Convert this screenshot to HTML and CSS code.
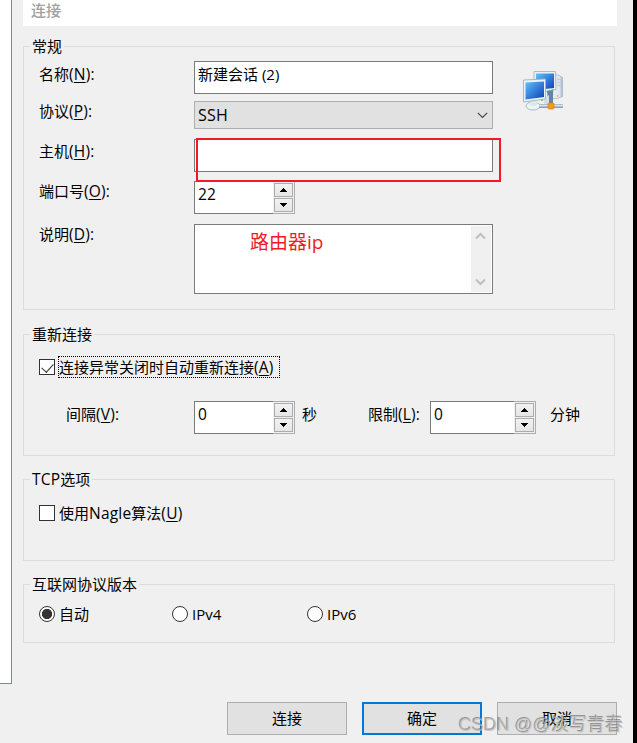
FILE: index.html
```
<!DOCTYPE html>
<html lang="zh-CN">
<head>
    <meta charset="UTF-8">
    <meta name="viewport" content="width=device-width, initial-scale=1.0">
    <title>新建会话属性</title>
    <link rel="stylesheet" href="styles.css">
</head>
<body>
    <div class="window">
        <div class="tree-panel"></div>
        <div class="content">
            <div class="title">连接</div>

            <fieldset class="group general">
                <legend>常规</legend>
                <div class="general-body">
                    <div class="form">
                        <div class="row row-name">
                            <label for="name">名称<span class="en">(<u>N</u>):</span></label>
                            <input class="text-field" id="name" type="text" value="新建会话 (2)">
                        </div>
                        <div class="row row-protocol">
                            <label>协议<span class="en">(<u>P</u>):</span></label>
                            <div class="combo">
                                <span class="en">SSH</span>
                                <svg width="11" height="7" viewBox="0 0 11 7"><path d="M0.8 0.8L5.5 5.5L10.2 0.8" fill="none" stroke="#444" stroke-width="1.2"/></svg>
                            </div>
                        </div>
                        <div class="row row-host">
                            <label for="host">主机<span class="en">(<u>H</u>):</span></label>
                            <div class="host-wrap">
                                <input class="text-field" id="host" type="text">
                                <div class="red-box"></div>
                            </div>
                        </div>
                        <div class="row row-port">
                            <label for="port">端口号<span class="en">(<u>O</u>):</span></label>
                            <div class="spinner">
                                <input class="en" id="port" type="text" value="22">
                                <div class="arrows">
                                    <button type="button"><svg width="7" height="4" viewBox="0 0 7 4"><path d="M3 0h1v1h1v1h1v1h1v1H0V3h1V2h1V1h1z"/></svg></button>
                                    <button type="button"><svg width="7" height="4" viewBox="0 0 7 4"><path d="M3 4h1V3h1V2h1V1h1V0H0v1h1v1h1v1h1z"/></svg></button>
                                </div>
                            </div>
                        </div>
                        <div class="row row-desc">
                            <label>说明<span class="en">(<u>D</u>):</span></label>
                            <div class="desc">
                                <div class="note">路由器ip</div>
                                <div class="scrollbar">
                                    <svg width="11" height="8" viewBox="0 0 11 8"><path d="M1 6.5L5.5 2L10 6.5" fill="none" stroke="#bfbfbf" stroke-width="2"/></svg>
                                    <svg width="11" height="8" viewBox="0 0 11 8"><path d="M1 1.5L5.5 6L10 1.5" fill="none" stroke="#bfbfbf" stroke-width="2"/></svg>
                                </div>
                            </div>
                        </div>
                    </div>
                    <svg class="session-icon" width="42" height="42" viewBox="0 0 42 42">
                        <defs>
                            <linearGradient id="screen" x1="0" y1="0" x2="1" y2="1">
                                <stop offset="0" stop-color="#62c4f4"/>
                                <stop offset="0.5" stop-color="#3280dc"/>
                                <stop offset="1" stop-color="#103fae"/>
                            </linearGradient>
                            <linearGradient id="tower" x1="0" y1="0" x2="1" y2="0">
                                <stop offset="0" stop-color="#eef3f7"/>
                                <stop offset="0.7" stop-color="#dce5ed"/>
                                <stop offset="1" stop-color="#a4b6c6"/>
                            </linearGradient>
                        </defs>
                        <path d="M31 4l5 1.500 3.500 2v19l-5 2h-5z" fill="url(#tower)" stroke="#a9b8c5" stroke-width="0.8"/>
                        <path d="M34 9l4 1M34 12l4 1M34 15l4 1" stroke="#b4c2cf" stroke-width="0.8"/>
                        <path d="M11 1.500h21.500l.5 18-11 2-11-2z" fill="#eaf0f4" stroke="#a3b5c4" stroke-width="0.9"/>
                        <path d="M13 3.500h18v14.500l-18 2z" fill="url(#screen)"/>
                        <path d="M24 21l6-1v13h-5z" fill="#6286a4"/>
                        <path d="M21 28l5-3v9h-5z" fill="#d3dee7"/>
                        <ellipse cx="10" cy="36" rx="7" ry="4" fill="#eef3f6" stroke="#a8bac8" stroke-width="1"/>
                        <path d="M7 29h7v6q-3.500 2-7 0z" fill="#dce6ed"/>
                        <path d="M0.500 10l22-1v20L.500 32z" fill="#edf2f6" stroke="#9eb1c1" stroke-width="0.9"/>
                        <path d="M2.500 12.500l18.500-1v15.500L2.500 29.500z" fill="url(#screen)"/>
                        <path d="M16 36h24" stroke="#8ea2b4" stroke-width="4"/>
                        <path d="M16 35.500h24" stroke="#dce6ee" stroke-width="1.800"/>
                        <rect x="25" y="33" width="6" height="6" rx="1" fill="#f49b14" stroke="#d98522" stroke-width="0.8"/>
                        <path d="M18 30.500l2-.4M28.500 20l2-.3" stroke="#60c850" stroke-width="1"/>
                        <circle cx="34.500" cy="26" r="0.8" fill="#eb8c80"/>
                    </svg>
                </div>
            </fieldset>

            <fieldset class="group reconnect">
                <legend>重新连接</legend>
                <div class="check-line">
                    <input type="checkbox" id="auto" checked>
                    <label class="focused" for="auto">连接异常关闭时自动重新连接<span class="en">(<u>A</u>)</span></label>
                </div>
                <div class="interval-line">
                    <label class="interval-label" for="interval">间隔<span class="en">(<u>V</u>):</span></label>
                    <div class="spinner">
                        <input class="en" id="interval" type="text" value="0">
                        <div class="arrows">
                            <button type="button"><svg width="7" height="4" viewBox="0 0 7 4"><path d="M3 0h1v1h1v1h1v1h1v1H0V3h1V2h1V1h1z"/></svg></button>
                            <button type="button"><svg width="7" height="4" viewBox="0 0 7 4"><path d="M3 4h1V3h1V2h1V1h1V0H0v1h1v1h1v1h1z"/></svg></button>
                        </div>
                    </div>
                    <span class="seconds">秒</span>
                    <label class="limit-label" for="limit">限制<span class="en">(<u>L</u>):</span></label>
                    <div class="spinner wide">
                        <input class="en" id="limit" type="text" value="0">
                        <div class="arrows">
                            <button type="button"><svg width="7" height="4" viewBox="0 0 7 4"><path d="M3 0h1v1h1v1h1v1h1v1H0V3h1V2h1V1h1z"/></svg></button>
                            <button type="button"><svg width="7" height="4" viewBox="0 0 7 4"><path d="M3 4h1V3h1V2h1V1h1V0H0v1h1v1h1v1h1z"/></svg></button>
                        </div>
                    </div>
                    <span class="minutes">分钟</span>
                </div>
            </fieldset>

            <fieldset class="group tcp">
                <legend><span class="en">TCP</span>选项</legend>
                <div class="check-line">
                    <input type="checkbox" id="nagle">
                    <label for="nagle">使用<span class="en">Nagle</span>算法<span class="en">(<u>U</u>)</span></label>
                </div>
            </fieldset>

            <fieldset class="group ip">
                <legend>互联网协议版本</legend>
                <div class="radio-line">
                    <label><input type="radio" name="ip" checked>自动</label>
                    <label><input type="radio" name="ip">IPv4</label>
                    <label><input type="radio" name="ip">IPv6</label>
                </div>
            </fieldset>

            <div class="buttons">
                <button class="btn" type="button">连接</button>
                <button class="btn btn-default" type="button">确定</button>
                <button class="btn" type="button">取消</button>
            </div>
        </div>
    </div>
    <div class="watermark">CSDN @@淡写青春</div>
</body>
</html>
```
FILE: styles.css
```
* {
    box-sizing: border-box;
}
body {
    margin: 0;
    height: 743px;
    overflow: hidden;
    position: relative;
    background-color: #000;
    color: #000;
    font-family: "Open Sans", "Noto Sans CJK SC", sans-serif;
    font-size: 15px;
    line-height: 20px;
}
input, button {
    font-family: inherit;
    font-size: inherit;
    color: inherit;
    margin: 0;
    border-radius: 0;
    outline: none;
}
svg {
    display: block;
    flex: none;
}
u {
    text-decoration-thickness: 1px;
    text-underline-offset: 2px;
}
label {
    white-space: nowrap;
}
.en {
    font-size: 15.5px;
    letter-spacing: 0.2px;
}
.window {
    width: 633px;
    height: 743px;
    background-color: #f0f0f0;
    display: flex;
    align-items: flex-start;
}
.tree-panel {
    width: 12px;
    height: 684px;
    background-color: #fff;
    border-right: 1px solid #828790;
    border-bottom: 1px solid #828790;
}
.content {
    width: 594px;
    margin-left: 11px;
}
.title {
    height: 26px;
    padding-left: 8px;
    background-color: #fff;
    color: #a0a0a0;
    font-weight: 500;
    line-height: 20px;
}

/* group boxes */
.group {
    width: 592px;
    margin: 0;
    padding: 0;
    border: 1px solid #dcdcdc;
}
legend {
    height: 21px;
    margin-left: 6px;
    padding: 0 2px;
    line-height: 21px;
}
.general {
    height: 274px;
    margin-top: 10px;
}
.reconnect {
    height: 132px;
    margin-top: 14px;
}
.tcp {
    height: 92px;
    margin-top: 13px;
}
.ip {
    height: 69px;
    margin-top: 13px;
}

/* general settings */
.general-body {
    display: flex;
    padding: 4px 0 0 15px;
}
.form {
    width: 454px;
}
.row {
    display: grid;
    grid-template-columns: 155px 299px;
    align-items: start;
}
.row-name label {
    margin-top: 3px;
}
.row-protocol {
    margin-top: 7px;
}
.row-host {
    margin-top: 10px;
}
.row-host label {
    margin-top: 2px;
}
.row-port {
    margin-top: 9px;
}
.row-desc {
    margin-top: 10px;
}
.text-field {
    display: block;
    width: 299px;
    height: 33px;
    padding: 0 3px 8px;
    border: 1px solid #7a7a7a;
    background-color: #fff;
}
.combo {
    display: flex;
    align-items: center;
    justify-content: space-between;
    height: 28px;
    padding: 0 4px 0 3px;
    border: 1px solid #adadad;
    background-color: #e1e1e1;
}
.combo .en {
    font-size: 16px;
}
.host-wrap {
    position: relative;
}
.red-box {
    position: absolute;
    left: 2px;
    top: -1px;
    width: 305px;
    height: 44px;
    border: 2px solid #ed1c24;
}
.spinner {
    display: flex;
    width: 101px;
    height: 33px;
}
.spinner.wide {
    width: 106px;
}
.spinner input {
    flex: 1;
    min-width: 0;
    padding: 0 3px 7px;
    border: 1px solid #7a7a7a;
    border-right: none;
    background-color: #fff;
}
.arrows {
    display: flex;
    flex-direction: column;
    gap: 1px;
    width: 22px;
    padding: 1px;
    border: 1px solid #adadad;
    border-left: none;
    background-color: #f0f0f0;
}
.arrows button {
    flex: 1;
    display: flex;
    align-items: center;
    justify-content: center;
    padding: 0;
    border: 1px solid #acacac;
    background: linear-gradient(#f2f2f2, #e5e5e5);
}
.desc {
    display: flex;
    height: 70px;
    padding: 1px;
    border: 1px solid #7a7a7a;
    background-color: #fff;
}
.note {
    flex: 1;
    padding: 6px 0 0 54px;
    color: #ed1c24;
    font-size: 19px;
}
.scrollbar {
    display: flex;
    flex-direction: column;
    justify-content: space-between;
    align-items: center;
    width: 20px;
    padding: 6px 1px 6px 0;
    background-color: #f0f0f0;
}
.session-icon {
    margin: 9px 0 0 30px;
}

/* check boxes and radios */
.check-line {
    display: flex;
    align-items: center;
    padding-left: 15px;
}
.check-line label {
    height: 22px;
    margin-left: 3px;
    padding: 0 5px 0 0;
    border: 1px solid transparent;
}
.check-line label.focused {
    border: 1px dotted #000;
}
.reconnect .check-line {
    padding-top: 11px;
}
.tcp .check-line {
    padding-top: 12px;
}
input[type="checkbox"], input[type="radio"] {
    appearance: none;
    flex: none;
    width: 16px;
    height: 16px;
    border: 1px solid #333;
    background-color: #fff;
}
input[type="checkbox"]:checked {
    position: relative;
}
input[type="checkbox"]:checked::after {
    content: "";
    position: absolute;
    left: 4px;
    top: 1px;
    width: 6px;
    height: 10px;
    border: solid #333;
    border-width: 0 1.5px 1.5px 0;
    transform: rotate(42deg);
}
input[type="radio"] {
    border-radius: 50%;
}
input[type="radio"]:checked {
    background-image: radial-gradient(circle, #333 4.8px, transparent 5.4px);
}
.interval-line {
    display: flex;
    align-items: flex-start;
    padding: 23px 0 0 42px;
}
.interval-line label, .interval-line > span {
    margin-top: 3px;
}
.interval-label {
    width: 128px;
}
.seconds {
    width: 66px;
    padding-left: 7px;
}
.limit-label {
    width: 69px;
    padding-left: 7px;
}
.minutes {
    padding-left: 14px;
}
.radio-line {
    display: grid;
    grid-template-columns: 133px 135px 100px;
    padding: 9px 0 0 15px;
}
.radio-line label {
    display: flex;
    align-items: center;
    gap: 4px;
}

/* bottom buttons */
.buttons {
    display: flex;
    justify-content: flex-end;
    gap: 15px;
    margin-top: 59px;
}
.btn {
    width: 120px;
    height: 33px;
    padding: 0 0 2px;
    border: 1px solid #adadad;
    background-color: #e1e1e1;
}
.btn-default {
    border: 2px solid #0078d7;
}
.watermark {
    position: absolute;
    left: 459px;
    top: 713px;
    color: rgba(190, 190, 190, 0.75);
    font-family: "Liberation Sans", "Noto Sans CJK SC", sans-serif;
    font-size: 18px;
    line-height: 24px;
    white-space: nowrap;
    text-shadow: -1px -1px 0 rgba(100, 100, 100, 0.6);
}
```
